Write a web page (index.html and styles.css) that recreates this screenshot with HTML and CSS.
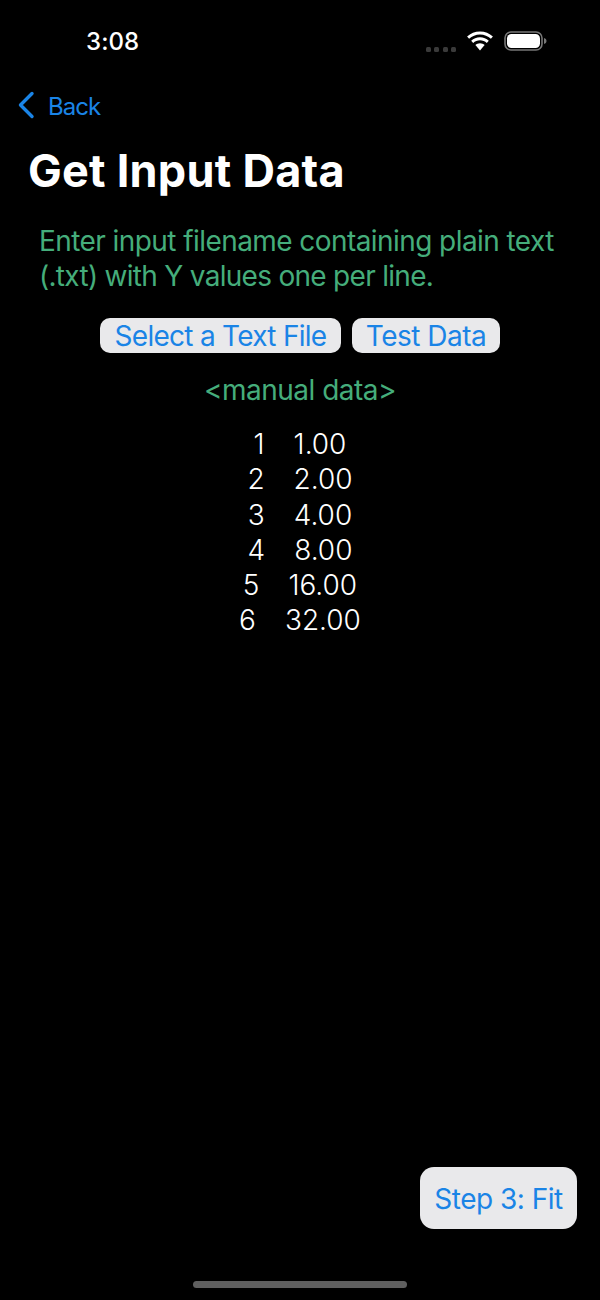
FILE: index.html
```html
<!DOCTYPE html>
<html lang="en">
<head>
<meta charset="utf-8">
<title>Get Input Data</title>
<link rel="stylesheet" href="styles.css">
</head>
<body>
<div class="screen">
  <header class="status">
    <span class="time">3:08</span>
    <div class="status-icons">
      <div class="signal"><i></i><i></i><i></i><i></i></div>
      <svg class="wifi" width="30" height="22" viewBox="0 0 30 22"><path d="M15 4.5c4.200 0 8 1.600 10.900 4.300l2-2.200C24.500 3.400 20 1.500 15 1.500S5.500 3.400 2.100 6.600l2 2.200C7 6.100 10.800 4.500 15 4.500z" fill="#fff"/><path d="M15 10.300c2.600 0 5 1 6.800 2.700l2-2.200c-2.300-2.200-5.400-3.500-8.800-3.500s-6.500 1.300-8.800 3.500l2 2.200c1.800-1.700 4.200-2.700 6.800-2.700z" fill="#fff"/><path d="M15 13.300c-1.800 0-3.400.7-4.600 1.800L15 20.500l4.600-5.400c-1.200-1.100-2.800-1.800-4.600-1.800z" fill="#fff"/></svg>
      <svg class="battery" width="44" height="22" viewBox="0 0 44 22"><rect x="1" y="2" width="37" height="18" rx="6" fill="none" stroke="#777" stroke-width="1.600"/><rect x="3" y="4" width="33" height="14" rx="4.500" fill="#fff"/><path d="M40 8c1.500.4 2.500 1.500 2.500 3s-1 2.600-2.500 3z" fill="#777"/></svg>
    </div>
  </header>
  <nav class="nav">
    <svg class="chevron" width="18" height="28" viewBox="0 0 18 28"><path d="M15 2.500 3.500 14 15 25.500" fill="none" stroke="#1a84e6" stroke-width="3.400" stroke-linecap="round" stroke-linejoin="round"/></svg>
    <span class="back">Back</span>
  </nav>
  <h1 class="title">Get Input Data</h1>
  <p class="intro">Enter input filename containing plain text <span class="intro-tail">(.txt) with Y values one per line.</span></p>
  <div class="actions">
    <button class="btn btn-file">Select a Text File</button>
    <button class="btn btn-test">Test Data</button>
  </div>
  <p class="source">&lt;manual data&gt;</p>
  <div class="data">
    <div class="row"><span>1</span><span>1.00</span></div>
    <div class="row"><span>2</span><span>2.00</span></div>
    <div class="row"><span>3</span><span>4.00</span></div>
    <div class="row"><span>4</span><span>8.00</span></div>
    <div class="row"><span>5</span><span>16.00</span></div>
    <div class="row"><span>6</span><span>32.00</span></div>
  </div>
  <div class="footer">
    <button class="btn btn-step">Step 3: Fit</button>
  </div>
  <div class="home"><div class="home-bar"></div></div>
</div>
</body>
</html>
```
FILE: styles.css
```css
* { box-sizing: border-box; }
html, body { margin: 0; padding: 0; background: #000; }
body { font-family: Inter, "Liberation Sans", sans-serif; color: #fff; }
.screen { width: 600px; height: 1300px; display: flex; flex-direction: column; overflow: hidden; background: #000; }

.status { height: 82px; flex: none; display: flex; justify-content: space-between; align-items: center; padding: 2px 52px 0 86px; }
.time { font-size: 24px; font-weight: 500; letter-spacing: 0.1px; line-height: 30px; }
.status-icons { display: flex; align-items: center; }
.signal { display: flex; gap: 3.500px; margin: 14px 9px 0 0; }
.signal i { width: 5px; height: 5px; border-radius: 1.500px; background: #3a3a3a; }
.wifi { margin-right: 9px; margin-top: -2px; }
.battery { margin-top: -2px; }

.nav { height: 46px; flex: none; display: flex; align-items: center; padding-left: 17px; }
.back { margin: 2px 0 0 13px; font-size: 24px; letter-spacing: -1px; color: #1a84e6; }

.title { margin: 8px 0 0 28px; font-size: 45px; line-height: 70px; font-weight: 700; letter-spacing: 0.25px; height: 60px; }
.intro { margin: 28px 30px 0 39px; font-size: 28px; line-height: 35px; font-weight: 380; color: #45ad7b; letter-spacing: -0.57px; }
.intro-tail { letter-spacing: -0.71px; }

.actions { display: flex; justify-content: center; gap: 11px; margin-top: 24px; }
.btn { border: 0; padding: 0; background: #e9e9eb; color: #1a84e6; font-family: inherit; font-weight: 400; font-size: 28px; letter-spacing: -0.72px; }
.btn-file { width: 241px; height: 35px; border-radius: 10px; }
.btn-test { width: 148px; height: 35px; border-radius: 10px; letter-spacing: -0.5px; }

.source { margin: 20px 0 0; text-align: center; font-size: 28px; line-height: 35px; font-weight: 380; color: #45ad7b; letter-spacing: -0.5px; }

.data { margin-top: 19px; }
.row { display: flex; justify-content: center; gap: 29px; height: 35.300px; font-size: 28px; line-height: 35px; font-weight: 350; letter-spacing: 0; }

.footer { margin-top: auto; display: flex; justify-content: flex-end; padding-right: 23px; }
.btn-step { width: 157px; height: 62px; border-radius: 14px; letter-spacing: -0.5px; padding-top: 2px; }

.home { height: 71px; flex: none; display: flex; justify-content: center; padding-top: 52px; }
.home-bar { width: 214px; height: 7px; border-radius: 4px; background: #5f5f5f; }
```
